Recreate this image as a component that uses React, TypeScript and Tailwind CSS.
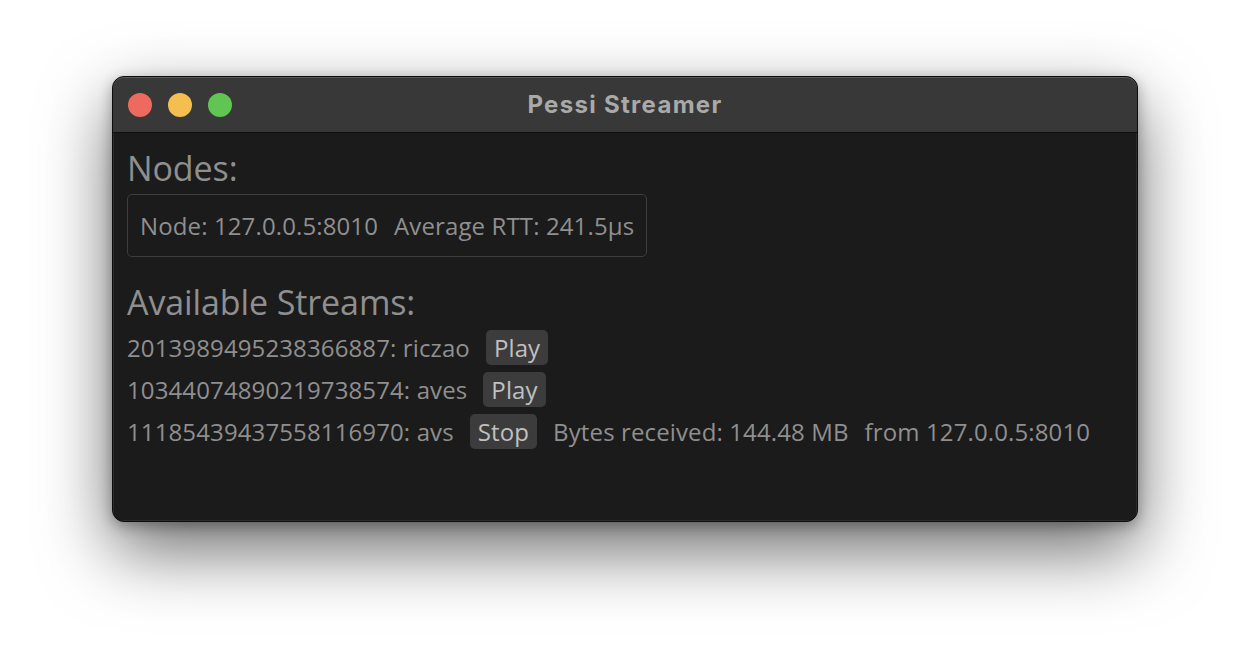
import React from "react";

const body = { fontFamily: '"Open Sans", "Noto Sans", sans-serif', letterSpacing: "0.12px" };

function Btn({ label }: { label: string }) {
  return (
    <div className="h-[35px] px-2 rounded-[5px] bg-[#3c3c3c] text-[#c0c0c0] text-[24px] leading-[35px]">
      {label}
    </div>
  );
}

export default function App() {
  return (
    <div className="w-[1250px] h-[670px] bg-white pl-[112px] pt-[76px]" style={body}>
      <div className="w-[1026px] h-[446px] rounded-[12px] bg-[#1b1b1b] border border-[#0c0c0c] shadow-[0_28px_70px_rgba(0,0,0,0.58),0_4px_14px_rgba(0,0,0,0.3)] overflow-hidden flex flex-col">
        <div className="h-[56px] shrink-0 bg-[#383838] border-b border-[#0f0f0f] rounded-t-[11px] shadow-[inset_0_1px_0_rgba(255,255,255,0.18)] flex items-center relative">
          <div className="flex items-center gap-4 pl-[15px]">
            <div className="w-6 h-6 rounded-full bg-[#ec6a5e]" />
            <div className="w-6 h-6 rounded-full bg-[#f4bf4f]" />
            <div className="w-6 h-6 rounded-full bg-[#61c554]" />
          </div>
          <div
            className="absolute inset-0 flex items-center justify-center text-[#a9a9a9] font-bold text-[24px] tracking-[1.3px]"
            style={{ fontFamily: 'Inter, "Liberation Sans", sans-serif' }}
          >
            Pessi Streamer
          </div>
        </div>
        <div className="flex-1 px-[14px] pt-[17px] text-[#8f8f8f] shadow-[inset_1px_0_0_rgba(255,255,255,0.08),inset_-1px_0_0_rgba(255,255,255,0.08),inset_0_-1px_0_rgba(255,255,255,0.08)]">
          <div className="text-[34px] leading-[36px] tracking-[-0.1px]">Nodes:</div>
          <div className="mt-2 inline-flex gap-4 border border-[#3e3e3e] rounded-[5px] px-3 py-[14px] text-[24px] leading-[33px]">
            <span>Node: 127.0.0.5:8010</span>
            <span>Average RTT: 241.5µs</span>
          </div>
          <div className="mt-[27px] text-[34px] leading-[36px] tracking-[-0.1px]">Available Streams:</div>
          <div className="mt-[10px] flex flex-col gap-[7px] text-[24px] leading-[32px]">
            <div className="flex items-center gap-4 h-[35px]">
              <span>2013989495238366887: riczao</span>
              <Btn label="Play" />
            </div>
            <div className="flex items-center gap-4 h-[35px]">
              <span>10344074890219738574: aves</span>
              <Btn label="Play" />
            </div>
            <div className="flex items-center gap-4 h-[35px]">
              <span>11185439437558116970: avs</span>
              <Btn label="Stop" />
              <span>Bytes received: 144.48 MB</span>
              <span>from 127.0.0.5:8010</span>
            </div>
          </div>
        </div>
      </div>
    </div>
  );
}
